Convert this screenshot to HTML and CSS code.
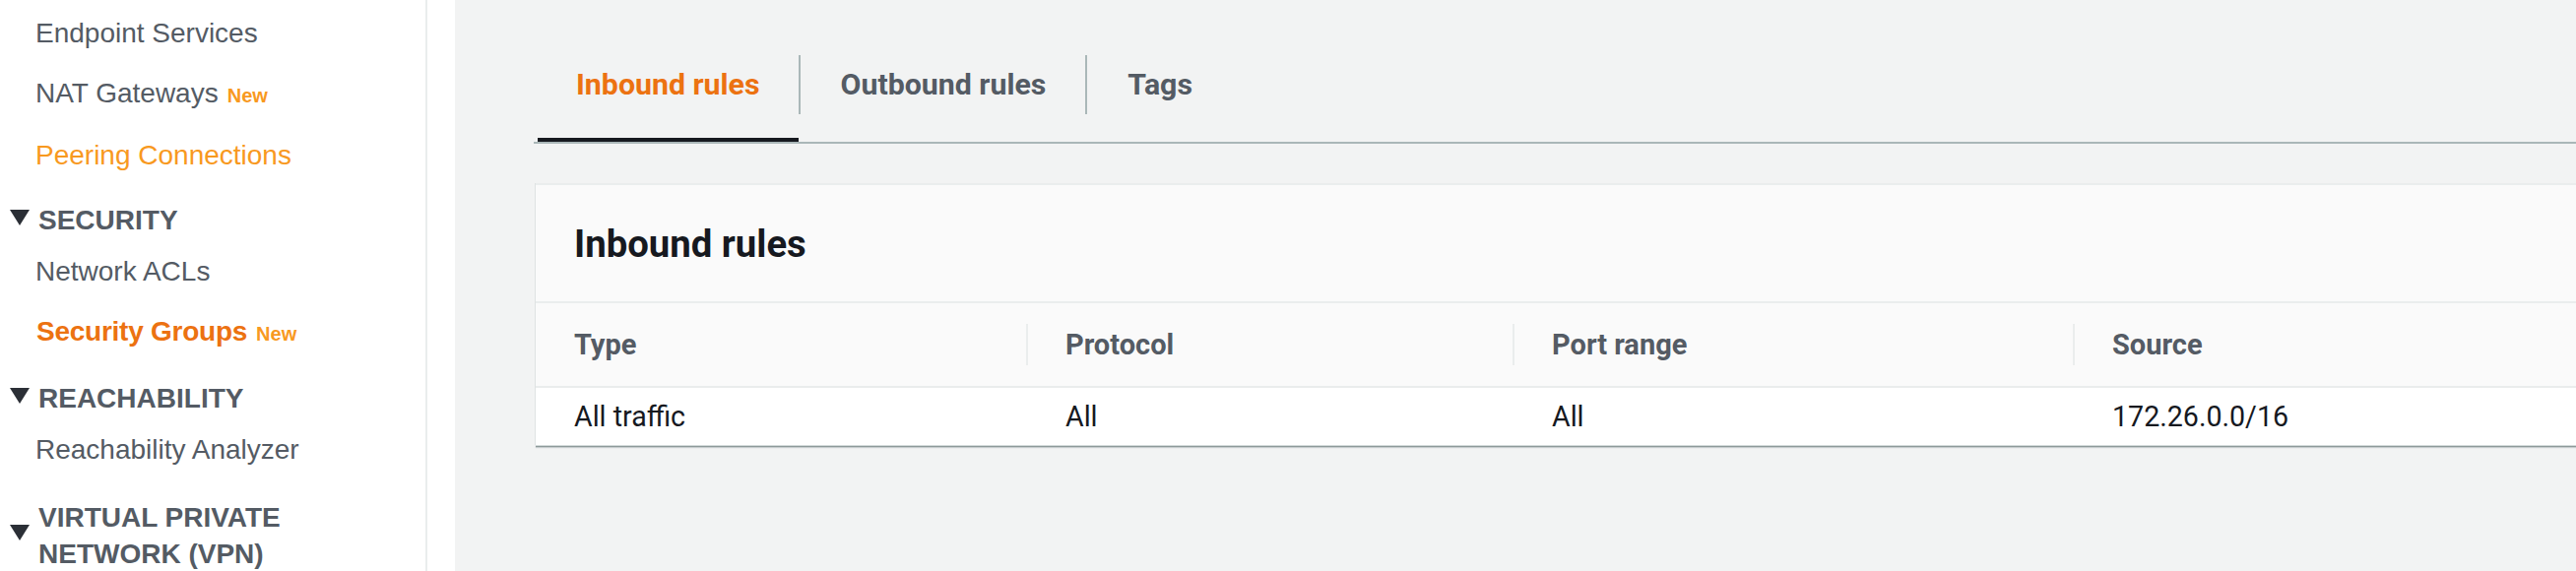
FILE: index.html
```html
<!DOCTYPE html>
<html lang="en">
<head>
<meta charset="utf-8">
<title>Security Groups</title>
<link rel="stylesheet" href="styles.css">
</head>
<body>
<div class="layout">
  <nav class="sidebar">
    <div class="sidebar-inner">
      <a class="nav-item">Endpoint Services</a>
      <a class="nav-item">NAT Gateways<span class="badge">New</span></a>
      <a class="nav-item visited">Peering Connections</a>
      <div class="nav-section">
        <svg class="caret" width="20" height="16" viewBox="0 0 20 16"><path d="M0 0H20L10 16Z"/></svg>
        <span>SECURITY</span>
      </div>
      <a class="nav-item">Network ACLs</a>
      <a class="nav-item active">Security Groups<span class="badge">New</span></a>
      <div class="nav-section">
        <svg class="caret" width="20" height="16" viewBox="0 0 20 16"><path d="M0 0H20L10 16Z"/></svg>
        <span>REACHABILITY</span>
      </div>
      <a class="nav-item">Reachability Analyzer</a>
      <div class="nav-section tall">
        <svg class="caret" width="20" height="16" viewBox="0 0 20 16"><path d="M0 0H20L10 16Z"/></svg>
        <span>VIRTUAL PRIVATE<br>NETWORK (VPN)</span>
      </div>
    </div>
  </nav>
  <main class="main">
    <div class="tabs">
      <div class="tab active"><span class="tab-label">Inbound rules</span></div>
      <div class="tab"><span class="tab-label">Outbound rules</span></div>
      <div class="tab"><span class="tab-label">Tags</span></div>
    </div>
    <section class="card">
      <header class="card-header">Inbound rules</header>
      <div class="table-row head">
        <div class="th"><span class="th-label">Type</span></div>
        <div class="th"><span class="th-label">Protocol</span></div>
        <div class="th"><span class="th-label">Port range</span></div>
        <div class="th"><span class="th-label">Source</span></div>
      </div>
      <div class="table-row body">
        <div class="td">All traffic</div>
        <div class="td">All</div>
        <div class="td">All</div>
        <div class="td">172.26.0.0/16</div>
      </div>
    </section>
  </main>
</div>
</body>
</html>
```

FILE: styles.css
```css
html, body {
  margin: 0;
  padding: 0;
  height: 580px;
  overflow: hidden;
  background: #f2f3f3;
}

.layout {
  display: flex;
  height: 580px;
}

/* ---------- Sidebar ---------- */
.sidebar {
  width: 462px;
  flex: 0 0 462px;
  background: #ffffff;
  display: flex;
}

.sidebar-inner {
  width: 432px;
  border-right: 2px solid #eaeded;
  padding-top: 4px;
  font-family: "Liberation Sans", Arial, Helvetica, sans-serif;
  color: #545b64;
  display: flex;
  flex-direction: column;
}

.nav-item {
  display: block;
  padding: 14px 0 15px 36px;
  font-size: 28px;
  line-height: 32px;
  color: #545b64;
  white-space: nowrap;
}

.nav-item.visited {
  color: #f8991f;
}

.nav-item.active {
  color: #ec7211;
  font-weight: bold;
  padding-left: 37px;
  letter-spacing: -0.25px;
}

.badge {
  margin-left: 9px;
  font-size: 20px;
  font-weight: bold;
  letter-spacing: 0;
  color: #f8991f;
}

.nav-section {
  display: flex;
  align-items: center;
  padding: 17px 0 4px 10px;
  font-size: 28px;
  line-height: 36px;
  font-weight: bold;
  color: #545b64;
}

.nav-section.tall {
  padding-top: 19px;
  line-height: 37px;
}

.caret {
  flex: 0 0 20px;
  margin-right: 9px;
  margin-bottom: 6px;
  fill: #2b2f36;
}

/* ---------- Main ---------- */
.main {
  flex: 1;
  min-width: 0;
  background: #f2f3f3;
  padding: 28px 0 0 80px;
  font-family: Roboto, "Noto Sans", Arial, sans-serif;
}

.tabs {
  display: flex;
  padding-left: 4px;
  border-bottom: 2px solid #aab7b8;
}

.tab {
  padding: 28px 0;
}

.tab.active {
  box-shadow: inset 0 -4px 0 #16191f;
}

.tab-label {
  display: block;
  height: 60px;
  line-height: 60px;
  padding: 0 39px;
  font-size: 30.3px;
  font-weight: bold;
  color: #545b64;
}

.tab.active .tab-label {
  color: #ec7211;
}

.tab + .tab .tab-label {
  border-left: 2px solid #aab7b8;
  padding: 0 40px 0 41px;
}

.card {
  margin: 40px 0 0 2px;
  background: #ffffff;
  border-top: 2px solid #eaeded;
  box-shadow: -1px 0 0 #dfe3e3, 0 1px 0 #d5dbdb, 0 2px 0 #8d9999, 0 3px 1px rgba(0, 28, 36, 0.18);
}

.card-header {
  height: 118px;
  display: flex;
  align-items: center;
  padding-left: 39px;
  background: #fafafa;
  border-bottom: 2px solid #eaeded;
  font-size: 38.3px;
  font-weight: bold;
  color: #16191f;
}

.table-row {
  display: grid;
  grid-template-columns: 498px 494px 569px 1fr;
}

.table-row.head {
  height: 84px;
  background: #fafafa;
  border-bottom: 2px solid #eaeded;
}

.th {
  display: flex;
  align-items: center;
}

.th-label {
  height: 42px;
  display: flex;
  align-items: center;
  padding-left: 38px;
  font-size: 29px;
  font-weight: bold;
  color: #545b64;
}

.th:first-child .th-label {
  padding-left: 39px;
}

.th + .th .th-label {
  border-left: 2px solid #eaeded;
}

.table-row.body {
  height: 58px;
  background: #ffffff;
}

.td {
  display: flex;
  align-items: center;
  padding-left: 40px;
  font-size: 28.6px;
  color: #16191f;
}

.td:first-child {
  padding-left: 39px;
}
```
